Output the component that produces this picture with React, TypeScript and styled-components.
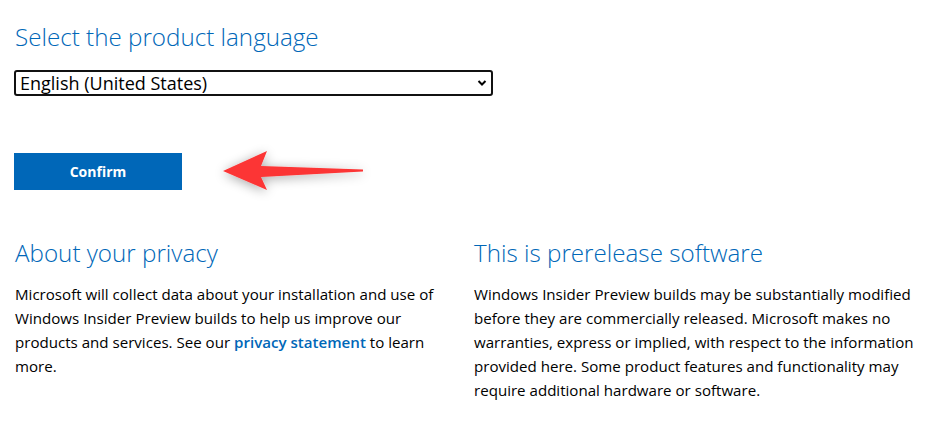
import React from "react";
import styled, { createGlobalStyle } from "styled-components";

const Global = createGlobalStyle`
  html, body { margin: 0; padding: 0; background: #fff; }
  body { font-family: "Open Sans", "Noto Sans", sans-serif; color: #000; }
`;

const Page = styled.div`
  padding: 17px 14px 0 14px;
  display: flex;
  flex-direction: column;
`;

const Heading = styled.h2`
  margin: 0;
  font-family: "Open Sans", "Noto Sans", sans-serif;
  font-weight: 300;
  font-size: 24.2px;
  line-height: 40px;
  color: #0067b8;
  padding-left: 1px;
`;

const Select = styled.div`
  margin-top: 13px;
  width: 479px;
  height: 26px;
  box-sizing: border-box;
  border: 2px solid #111;
  border-radius: 3px;
  display: flex;
  align-items: center;
  justify-content: space-between;
  padding: 0 4px 0 4px;
  font-size: 18px;
  color: #000;
`;

const ButtonRow = styled.div`
  margin-top: 56px;
  display: flex;
  align-items: center;
  gap: 28px;
`;

const Button = styled.button`
  width: 168px;
  height: 37px;
  border: 0;
  background: #0067b8;
  color: #fff;
  font-family: "Open Sans", "Noto Sans", sans-serif;
  font-weight: 700;
  font-size: 14px;
  padding: 0;
`;

const Columns = styled.div`
  margin-top: 43px;
  display: grid;
  grid-template-columns: 445px 445px;
  column-gap: 14px;
`;

const Section = styled.section`
  display: flex;
  flex-direction: column;
`;

const Para = styled.p`
  margin: 9px 0 0 1px;
  font-size: 15.1px;
  line-height: 24px;
  color: #000;
`;

const Link = styled.a`
  color: #0067b8;
  font-weight: 600;
  text-decoration: none;
`;

const Chevron = () => (
  <svg width="10" height="8" viewBox="0 0 10 8">
    <path d="M1.5 2 L5 5.5 L8.5 2" fill="none" stroke="#000" strokeWidth="2" />
  </svg>
);

const Arrow = () => (
  <svg width="170" height="70" viewBox="0 0 170 70" style={{ margin: "-16px 0 -16px 0" }}>
    <defs>
      <filter id="sh" x="-30%" y="-60%" width="160%" height="220%">
        <feGaussianBlur in="SourceAlpha" stdDeviation="6" />
        <feOffset dx="0" dy="2" result="b" />
        <feComponentTransfer>
          <feFuncA type="linear" slope="0.35" />
        </feComponentTransfer>
        <feMerge>
          <feMergeNode />
          <feMergeNode in="SourceGraphic" />
        </feMerge>
      </filter>
    </defs>
    <path
      filter="url(#sh)"
      d="M13 35 L57 15 L51 30 L153 33.5 L153 35.5 L51 41 L57 54 Z"
      fill="#fc3535"
    />
  </svg>
);

export default function App() {
  return (
    <>
      <Global />
      <Page>
        <Heading>Select the product language</Heading>
        <Select>
          <span>English (United States)</span>
          <Chevron />
        </Select>
        <ButtonRow>
          <Button>Confirm</Button>
          <Arrow />
        </ButtonRow>
        <Columns>
          <Section>
            <Heading>About your privacy</Heading>
            <Para>
              Microsoft will collect data about your installation and use of Windows Insider
              Preview builds to help us improve our products and services. See our{" "}
              <Link href="#">privacy statement</Link> to learn more.
            </Para>
          </Section>
          <Section>
            <Heading>This is prerelease software</Heading>
            <Para>
              Windows Insider Preview builds may be substantially modified before they are
              commercially released. Microsoft makes no warranties, express or implied, with
              respect to the information provided here. Some product features and functionality
              may require additional hardware or software.
            </Para>
          </Section>
        </Columns>
      </Page>
    </>
  );
}
